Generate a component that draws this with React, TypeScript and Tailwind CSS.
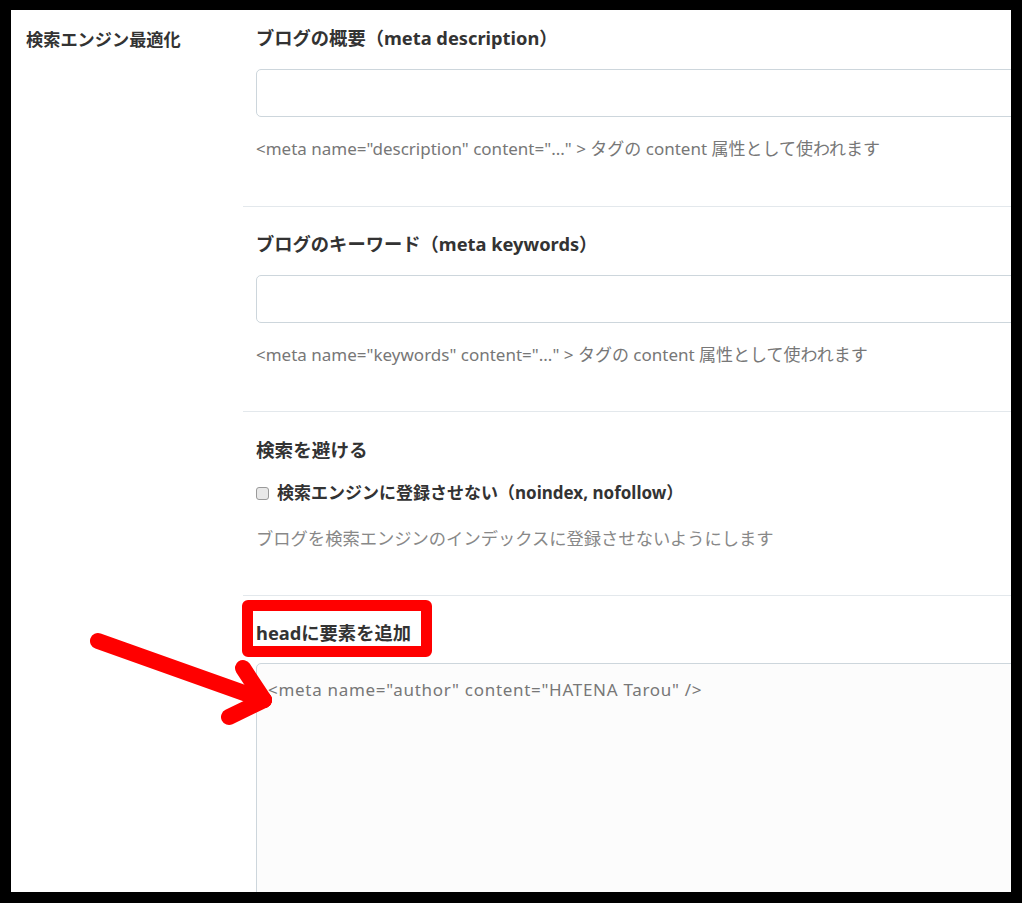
const font = { fontFamily: '"Noto Sans", "Noto Sans CJK JP", sans-serif' }

function Section({
  first = false,
  pb = 'pb-[45px]',
  children,
}: {
  first?: boolean
  pb?: string
  children: React.ReactNode
}) {
  return (
    <div
      className={
        first
          ? `pl-[13px] pt-[15px] ${pb}`
          : `border-t border-[#e3e8ec] pl-[13px] pt-[24px] ${pb}`
      }
    >
      {children}
    </div>
  )
}

export default function App() {
  return (
    <div className="h-[903px] w-[1022px] bg-black pl-[11px] pt-[10px]" style={font}>
      <div className="relative flex h-[882px] w-[1000px] overflow-hidden bg-white text-[#333]">
        <div className="w-[232px] shrink-0 pl-[15px] pt-[18px]">
          <div className="text-[17.2px] font-bold leading-[24px]">検索エンジン最適化</div>
        </div>

        <div className="min-w-0 flex-1">
          <Section first>
            <h2 className="text-[18.3px] font-bold leading-[26px]">ブログの概要（meta description）</h2>
            <div className="mt-[18px] h-[48px] w-[800px] rounded-[5px] border border-[#cdd6dc] bg-white" />
            <p className="mt-[20px] text-[17px] leading-[24px] text-[#777]">
              &lt;meta name="description" content="..." &gt; タグの content 属性として使われます
            </p>
          </Section>

          <Section pb="pb-[44px]">
            <h2 className="text-[18.3px] font-bold leading-[26px]">ブログのキーワード（meta keywords）</h2>
            <div className="mt-[18px] h-[48px] w-[800px] rounded-[5px] border border-[#cdd6dc] bg-white" />
            <p className="mt-[20px] text-[17px] leading-[24px] text-[#777]">
              &lt;meta name="keywords" content="..." &gt; タグの content 属性として使われます
            </p>
          </Section>

          <Section pb="pb-[44px]">
            <h2 className="pt-[1px] text-[18.6px] font-bold leading-[26px]">検索を避ける</h2>
            <label className="mt-[18px] flex items-center gap-[8px] text-[17px] font-bold leading-[24px]">
              <span className="h-[13px] w-[13px] rounded-[3px] border border-[#9a9a9a] bg-[#e8e8e8]" />
              検索エンジンに登録させない（noindex, nofollow）
            </label>
            <p className="mt-[22px] text-[17.3px] leading-[24px] text-[#888]">
              ブログを検索エンジンのインデックスに登録させないようにします
            </p>
          </Section>

          <div className="border-t border-[#e3e8ec] pl-[13px] pt-[24px]">
            <h2 className="text-[18.3px] font-bold leading-[26px]">headに要素を追加</h2>
            <div className="mt-[17px] h-[400px] w-[800px] rounded-[5px] border border-[#cdd6dc] bg-[#fcfcfc] px-[11px] pt-[14px]">
              <span className="text-[17px] leading-[24px] tracking-[0.7px] text-[#777]">
                &lt;meta name="author" content="HATENA Tarou" /&gt;
              </span>
            </div>
          </div>
        </div>

        <div className="absolute left-[231px] top-[590px] h-[57px] w-[190px] rounded-[6px] border-[11px] border-[#ff0000]" />

        <svg
          className="absolute left-0 top-0"
          width="400"
          height="760"
          viewBox="0 0 400 760"
          fill="none"
        >
          <g stroke="#ff0000" strokeWidth="16" strokeLinecap="round" strokeLinejoin="round">
            <line x1="87" y1="631" x2="253" y2="690" />
            <line x1="232" y1="658" x2="253" y2="690" />
            <line x1="218" y1="707" x2="253" y2="690" />
          </g>
        </svg>
      </div>
    </div>
  )
}
